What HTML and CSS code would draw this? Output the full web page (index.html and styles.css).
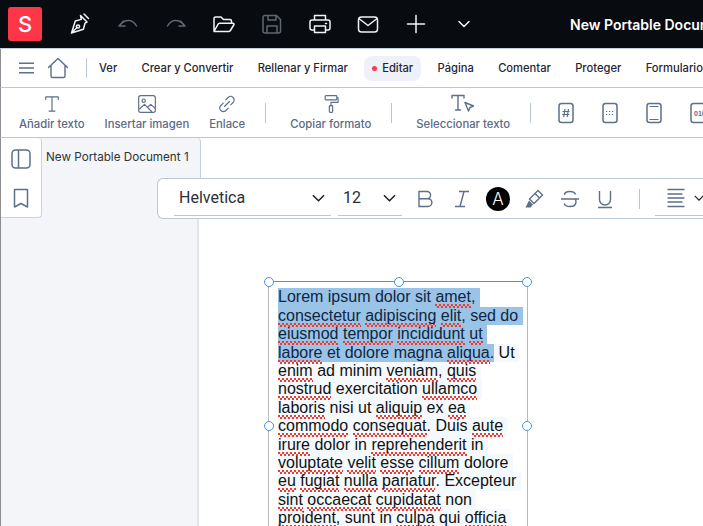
FILE: index.html
```html
<!DOCTYPE html>
<html lang="es">
<head>
<meta charset="utf-8">
<title>New Portable Document 1</title>
<link rel="stylesheet" href="styles.css">
</head>
<body>
<div class="app">
  <header class="topbar">
    <div class="logo">S</div>
    <div class="top-icons">
      <svg class="ti" viewBox="0 0 24 24"><path d="M12.500 3.500l6.500 6.500-2 1.200-1.600 6L3.500 21l3.800-12 6-1.600z M3.500 21l5.500-5.500 M16 2l4.500 4.500"/><circle cx="10" cy="14.500" r="1.600"/></svg>
      <svg class="ti dim" viewBox="0 0 24 24"><path d="M3 14l4.500-5M3 14h6M3.300 14C6 10 9 8.500 12.500 8.500c3.500 0 6 2 8 5.500"/></svg>
      <svg class="ti dim" viewBox="0 0 24 24"><path d="M21 14l-4.500-5M21 14h-6M20.700 14C18 10 15 8.500 11.500 8.500c-3.500 0-6 2-8 5.500"/></svg>
      <svg class="ti" viewBox="0 0 24 24"><path d="M2 19V6.500A1.500 1.500 0 0 1 3.500 5H9l2.500 2.500H18A1.500 1.500 0 0 1 19.500 9v2M2 19.500h15a1.500 1.500 0 0 0 1.400-1L22 12.500a1 1 0 0 0-1-1.300H7.500a1.500 1.500 0 0 0-1.400 1L2 19.500z"/></svg>
      <svg class="ti dim" viewBox="0 0 24 24"><path d="M5 3.500h11.500l4 4V19a2 2 0 0 1-2 2H5a2 2 0 0 1-2-2V5.500a2 2 0 0 1 2-2zM8 3.500V8h8V3.500M7 21v-7h10v7"/></svg>
      <svg class="ti" viewBox="0 0 24 24"><path d="M6.500 8V3.500h11V8M6.500 18H4a2 2 0 0 1-2-2v-6a2 2 0 0 1 2-2h16a2 2 0 0 1 2 2v6a2 2 0 0 1-2 2h-2.500M6.500 14h11v6.500h-11zM17.500 11.500h1"/></svg>
      <svg class="ti" viewBox="0 0 24 24"><rect x="2.500" y="5" width="19" height="15" rx="3"/><path d="M3.500 7l8.500 6.500L20.500 7"/></svg>
      <svg class="ti" viewBox="0 0 24 24"><path d="M12 3.500v17M3.500 12h17"/></svg>
      <svg class="ti" viewBox="0 0 24 24"><path d="M7 9.500l5 5 5-5"/></svg>
    </div>
    <div class="doc-title">New Portable Document 1</div>
  </header>

  <nav class="menubar">
    <svg class="burger" viewBox="0 0 15 12"><path d="M0 1.200h15M0 6h15M0 10.800h15"/></svg>
    <svg class="home" viewBox="0 0 22 22"><path d="M1.500 10.500L11 1.500l9.500 9M4 8.500V19a1.500 1.500 0 0 0 1.500 1.500h11A1.500 1.500 0 0 0 18 19V8.500"/></svg>
    <span class="vline menu-sep"></span>
    <div class="menu">
      <span class="mi">Ver</span>
      <span class="mi">Crear y Convertir</span>
      <span class="mi">Rellenar y Firmar</span>
      <span class="mi active"><i class="dot"></i>Editar</span>
      <span class="mi">Página</span>
      <span class="mi">Comentar</span>
      <span class="mi">Proteger</span>
      <span class="mi">Formulario</span>
    </div>
  </nav>

  <section class="toolbar">
    <div class="tool">
      <svg class="ic" viewBox="0 0 24 24"><path d="M4.500 6.500V3.500h15v3M12 3.500v17M8.500 20.500h7"/></svg>
      <span>Añadir texto</span>
    </div>
    <div class="tool">
      <svg class="ic" viewBox="0 0 24 24"><rect x="2" y="2" width="20" height="20" rx="2.500"/><circle cx="8" cy="8" r="2"/><path d="M3 18l6-5.500 8.500 8.500M13 15.500l3.500-3 5 4.500"/></svg>
      <span>Insertar imagen</span>
    </div>
    <div class="tool">
      <svg class="ic" viewBox="0 0 24 24"><path d="M10.500 7l2.800-2.800a4.200 4.200 0 0 1 6 6L16.500 13M13.500 17l-2.800 2.800a4.200 4.200 0 0 1-6-6L7.500 11M9 15l6-6"/></svg>
      <span>Enlace</span>
    </div>
    <span class="vline tool-sep"></span>
    <div class="tool">
      <svg class="ic" viewBox="0 0 24 24"><rect x="5" y="2" width="14" height="5" rx="1"/><path d="M19 4.500h1.500v5.500H12v4"/><rect x="10" y="14" width="4" height="8" rx="1"/></svg>
      <span>Copiar formato</span>
    </div>
    <span class="vline tool-sep"></span>
    <div class="tool">
      <svg class="ic wide" viewBox="0 0 24 20"><path d="M1 4V1.500h12V4M7 1.500V16M4.500 16h5M14 8.500l8.500 3.500-3.500 1.500-1.500 3.500z"/></svg>
      <span>Seleccionar texto</span>
    </div>
    <span class="vline"></span>
    <div class="fields">
      <svg class="fic" viewBox="0 0 16 22"><rect x="1" y="1.500" width="14" height="19" rx="2.500"/><path class="fine" d="M7 7l-1.300 8M10.500 7l-1.300 8M4.500 9.500h7M4.200 12.500h7"/></svg>
      <svg class="fic" viewBox="0 0 16 22"><rect x="1" y="1.500" width="14" height="19" rx="2.500"/><path class="fine" stroke-dasharray="1.200 1.800" d="M4 9.500h8M4 12.500h8"/></svg>
      <svg class="fic" viewBox="0 0 16 22"><rect x="1" y="1.500" width="14" height="19" rx="2.500"/><path class="fine" d="M3.500 4.500h9M3.500 17.500h9"/></svg>
      <svg class="fic" viewBox="0 0 16 22"><rect x="1" y="1.500" width="22" height="19" rx="2.500"/><text class="bin" x="4" y="14">010</text></svg>
    </div>
  </section>

  <main class="workspace">
    <aside class="side"></aside>
    <div class="page">
      <div class="textbox">
        <i class="h tl"></i><i class="h tc"></i><i class="h tr"></i><i class="h ml"></i><i class="h mr"></i>
        <p class="ln"><span class="sel">Lorem ipsum dolor sit <u>amet</u>, </span></p>
        <p class="ln"><span class="sel"><u>consectetur</u> <u>adipiscing</u> <u>elit</u>, sed do </span></p>
        <p class="ln"><span class="sel"><u>eiusmod</u> <u>tempor</u> <u>incididunt</u> <u>ut</u> </span></p>
        <p class="ln"><span class="sel"><u>labore</u> et dolore magna <u>aliqua</u>.</span><span class="pl"> Ut </span></p>
        <p class="ln"><span class="pl"><u>enim</u> ad minim <u>veniam</u>, <u>quis</u> </span></p>
        <p class="ln"><span class="pl"><u>nostrud</u> exercitation <u>ullamco</u> </span></p>
        <p class="ln"><span class="pl"><u>laboris</u> nisi ut <u>aliquip</u> ex <u>ea</u> </span></p>
        <p class="ln"><span class="pl"><u>commodo</u> <u>consequat</u>. Duis <u>aute</u> </span></p>
        <p class="ln"><span class="pl"><u>irure</u> dolor in <u>reprehenderit</u> in </span></p>
        <p class="ln"><span class="pl"><u>voluptate</u> <u>velit</u> <u>esse</u> <u>cillum</u> dolore </span></p>
        <p class="ln"><span class="pl"><u>eu</u> <u>fugiat</u> <u>nulla</u> <u>pariatur</u>. Excepteur </span></p>
        <p class="ln"><span class="pl"><u>sint</u> <u>occaecat</u> <u>cupidatat</u> non </span></p>
        <p class="ln"><span class="pl"><u>proident</u>, sunt in <u>culpa</u> qui <u>officia</u> </span></p>
      </div>
    </div>

    <div class="rail">
      <svg class="rail-ic" viewBox="0 0 20 20"><rect x="1" y="1" width="18" height="18" rx="3.500"/><path d="M7.500 1v18"/></svg>
      <svg class="rail-ic" viewBox="0 0 20 20"><path d="M4 1.500h12a.5.5 0 0 1 .5.500v17L10 15.500 3.500 19V2a.5.5 0 0 1 .5-.5z"/></svg>
    </div>
    <div class="tab">New Portable Document 1</div>

    <div class="fmt">
      <div class="sel-box font"><span>Helvetica</span><svg class="chev" viewBox="0 0 14 8"><path d="M1 1l6 6 6-6"/></svg></div>
      <div class="sel-box size"><span>12</span><svg class="chev" viewBox="0 0 14 8"><path d="M1 1l6 6 6-6"/></svg></div>
      <svg class="fi fi-b" viewBox="0 0 20 20"><path d="M4 2.500h8a3.500 3.500 0 0 1 0 7.200H4zM4 9.700h9a3.900 3.900 0 0 1 0 7.800H4zM4 2.500v15"/></svg>
      <svg class="fi fi-i" viewBox="0 0 20 20"><path d="M7 2.500h10M3 17.500h10M12 2.500L8 17.500"/></svg>
      <span class="color-a">A</span>
      <svg class="fi fi-h" viewBox="0 0 20 20"><path d="M14 1.500l4.500 4.500-8.500 8.500-4.500-4.500zM11 4.500l4.500 4.500"/><path class="fill" d="M1.500 18.500l3.500-7 4 4-2.500 3z"/></svg>
      <svg class="fi fi-s" viewBox="0 0 20 20"><path d="M15.500 5.500C15 3.500 13 2.500 10 2.500c-3 0-5.500 1.200-5.500 3.500M1 10h18M15 10c.6.7 1 1.700 1 2.700 0 3-2.500 4.800-6 4.800-3 0-5.200-1-6-3"/></svg>
      <svg class="fi fi-u" viewBox="0 0 20 20"><path d="M4.500 2v8.500a5.500 5.500 0 0 0 11 0V2M3 18.500h14"/></svg>
      <span class="vline fmt-sep"></span>
      <div class="sel-box align">
        <svg class="fi fi-a" viewBox="0 0 20 20"><path d="M1.500 1.500h17M1.500 6h15M1.500 10h17M1.500 14h15M1.500 18.500h17"/></svg>
        <svg class="chev small" viewBox="0 0 14 8"><path d="M1 1l6 6 6-6"/></svg>
      </div>
    </div>
  </main>
</div>
</body>
</html>
```

FILE: styles.css
```css
* { box-sizing: border-box; }
html, body { margin: 0; height: 100%; overflow: hidden; background: #fff; }
body { font-family: Inter, "Noto Sans", sans-serif; color: #1d2433; }

.app { width: 703px; height: 526px; display: flex; flex-direction: column; overflow: hidden; }

.topbar { flex: 0 0 49px; background: #080b10; display: flex; align-items: center; padding: 0 0 0 8px; border-bottom: 1px solid #c3cfdd; white-space: nowrap; overflow: hidden; }
.logo { flex: none; width: 34px; height: 34px; border-radius: 3px; background: #ff3648; color: #fff; font: 500 22px/34px Inter, sans-serif; text-align: center; }
.top-icons { flex: none; display: flex; align-items: center; gap: 24px; margin-left: 26px; }
.ti { width: 24px; height: 24px; fill: none; stroke: #f3f4f6; stroke-width: 1.500; stroke-linecap: round; stroke-linejoin: round; flex: none; }
.ti.dim { stroke: #62676e; }
.doc-title { flex: none; margin-left: 94px; color: #fff; font-size: 14px; font-weight: 600; }

.menubar { flex: 0 0 39px; display: flex; align-items: center; border-left: 1px solid #8b8f94; border-bottom: 1px solid #bcc7d4; padding-left: 18px; white-space: nowrap; overflow: hidden; }
.burger { width: 15px; height: 12px; fill: none; stroke: #5d6f89; stroke-width: 1.400; flex: none; }
.home { width: 22px; height: 22px; margin-left: 13px; fill: none; stroke: #5d6f89; stroke-width: 1.400; stroke-linejoin: round; stroke-linecap: round; flex: none; }
.vline { flex: none; display: block; width: 1px; height: 20px; background: #bcc7d4; }
.menu-sep { margin-left: 17px; }
.menu { display: flex; align-items: center; gap: 8.300px; margin-left: 4px; }
.mi { padding: 0 8px; height: 25px; line-height: 25px; font-size: 11.200px; font-weight: 500; color: #1f2633; border-radius: 8px; display: flex; align-items: center; flex: none; }
.mi.active { background: #eef1f7; }
.dot { width: 5px; height: 5px; border-radius: 50%; background: #ff3648; margin-right: 5px; }

.toolbar { flex: 0 0 50px; display: flex; align-items: center; gap: 20px; border-left: 1px solid #8b8f94; border-bottom: 1px solid #bcc7d4; padding-left: 18px; white-space: nowrap; overflow: hidden; }
.tool { display: flex; flex-direction: column; align-items: center; gap: 3px; font-size: 11.300px; font-weight: 500; color: #5a6b85; flex: none; }
.tool-sep { margin-right: 4px; }
.ic { width: 20px; height: 20px; fill: none; stroke: #5d6f89; stroke-width: 1.400; stroke-linecap: round; stroke-linejoin: round; }
.ic.wide { width: 24px; height: 20px; }
.fields { display: flex; gap: 28px; margin-left: 7px; flex: none; }
.fic { width: 16px; height: 22px; overflow: visible; fill: none; stroke: #5d6f89; stroke-width: 1.500; flex: none; }
.fine { stroke-width: 1.200; }
.bin { font: 700 7px "Liberation Sans", sans-serif; fill: #5d6f89; stroke: none; }

.workspace { flex: 1; position: relative; display: flex; min-height: 0; border-left: 1px solid #8b8f94; }
.side { flex: 0 0 198px; background: #f4f5f8; border-right: 2px solid #e2e4e8; }
.page { flex: 1; background: #fff; padding: 143px 0 0 69px; overflow: hidden; }
.textbox { position: relative; width: 260px; height: 400px; border-top: 1px solid #4a94d8; border-left: 1px solid #b5b8bc; border-right: 1px solid #b5b8bc; padding: 6.400px 0 0 9px; font: 16px/18.400px "Liberation Sans", Arial, sans-serif; color: #111; }
.ln { margin: 0; height: 18.400px; white-space: pre; }
.sel { background: #9ac3e8; display: inline-block; height: 18.400px; color: #10263d; }
.pl { background: #f4f9fe; display: inline-block; height: 18.400px; }
u { position: relative; z-index: 1; text-decoration: none; padding-bottom: 3px; background-image: linear-gradient(45deg, transparent 38%, #f2392e 38% 62%, transparent 62%), linear-gradient(-45deg, transparent 38%, #f2392e 38% 62%, transparent 62%); background-size: 4px 4px; background-repeat: repeat-x; background-position: 0 100%, 2px 100%; }
.h { position: absolute; width: 10px; height: 10px; border-radius: 50%; background: #fff; border: 1px solid #4a94d8; }
.tl { left: -5px; top: -5px; }
.tc { left: 125px; top: -5px; }
.tr { right: -5px; top: -5px; }
.ml { left: -5px; top: 139px; }
.mr { right: -5px; top: 139px; }

.rail { position: absolute; left: 0; top: 0; width: 41px; height: 80px; background: #fff; border: 1px solid #c9d2de; border-left: 0; border-top: 0; border-radius: 0 4px 4px 0; display: flex; flex-direction: column; align-items: center; gap: 19px; padding-top: 11px; z-index: 2; }
.rail-ic { width: 20px; height: 20px; fill: none; stroke: #5d6f89; stroke-width: 1.500; stroke-linejoin: round; }
.tab { position: absolute; left: 41px; top: 0; width: 159px; height: 41px; background: #f4f5f8; border: 1px solid #c3cfdd; border-width: 0 1px 0 0; border-radius: 0 4px 0 0; padding: 12px 0 0 4px; font-size: 11.700px; color: #333; white-space: nowrap; }

.fmt { position: absolute; left: 156px; top: 40px; width: 560px; height: 41px; background: #fff; border: 1px solid #bcc7d4; border-right: 0; border-radius: 6px 0 0 6px; display: flex; align-items: center; padding-left: 16px; z-index: 3; white-space: nowrap; }
.sel-box { flex: none; height: 36px; display: flex; align-items: center; justify-content: space-between; border-bottom: 1px solid #bcc7d4; color: #2a2f38; font-family: Roboto, sans-serif; font-size: 16px; margin-top: -1px; }
.font { width: 157px; padding: 0 6px 0 5px; }
.size { width: 64px; margin-left: 7px; padding: 0 6px 0 5px; }
.chev { width: 13px; height: 8px; fill: none; stroke: #15181e; stroke-width: 1.500; flex: none; }
.fi { width: 20px; height: 20px; fill: none; stroke: #5d6f89; stroke-width: 1.400; flex: none; }
.fi-b { margin-left: 13px; }
.fi-i { margin-left: 17px; }
.fi-h { margin-left: 14px; }
.fi-s { margin-left: 16px; }
.fi-u { margin-left: 15px; }
.fi-a { margin-left: 11px; stroke-width: 1.700; }
.fill { fill: #5d6f89; stroke: none; }
.color-a { flex: none; width: 24px; height: 24px; border-radius: 50%; background: #000; color: #fff; text-align: center; font: 300 17px/24px Inter, sans-serif; margin-left: 14px; }
.fmt-sep { margin-left: 24px; }
.align { margin-left: 15px; width: 60px; justify-content: flex-start; gap: 8px; }
.chev.small { width: 10px; height: 6px; }
```
